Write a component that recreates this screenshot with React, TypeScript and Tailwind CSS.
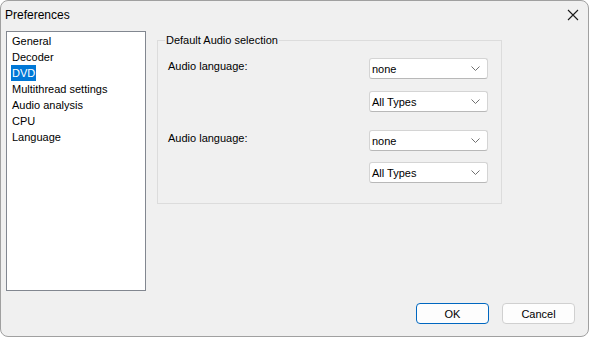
import React from 'react';

const ITEMS = ['General', 'Decoder', 'DVD', 'Multithread settings', 'Audio analysis', 'CPU', 'Language'];

function Chevron() {
  return (
    <svg width="9" height="5" viewBox="0 0 9 5" className="shrink-0">
      <path d="M0.5 0.5 L4.5 4.5 L8.5 0.5" fill="none" stroke="#707070" strokeWidth="1" />
    </svg>
  );
}

function Combo({ value }: { value: string }) {
  return (
    <div className="ml-auto flex h-[21px] w-[119px] items-center justify-between rounded-[3px] border border-[#d4d4d4] border-b-[#b8b8b8] bg-white pl-[2px] pr-[7px]">
      <span>{value}</span>
      <Chevron />
    </div>
  );
}

export default function App() {
  return (
    <div
      className="flex h-[337px] w-[589px] flex-col overflow-hidden rounded-[8px] border border-[#a0a0a0] bg-[#f0f0f0] text-[11px] leading-[16px] text-black"
      style={{ fontFamily: '"Liberation Sans", Arial, sans-serif' }}
    >
      {/* Title bar */}
      <div className="flex h-[27px] shrink-0 items-center justify-between pl-[4px] pr-[9px]">
        <span className="text-[12px]">Preferences</span>
        <svg width="12" height="12" viewBox="0 0 12 12">
          <path d="M1 1 L11 11 M11 1 L1 11" stroke="#1a1a1a" strokeWidth="1.1" />
        </svg>
      </div>

      {/* Body */}
      <div className="flex flex-1 pl-[5px] pt-[3px]">
        <div className="h-[260px] w-[140px] shrink-0 border border-[#828790] bg-white pl-[4px] pt-[1px]">
          {ITEMS.map((item) => (
            <div key={item} className="flex h-[16px] items-center">
              <span className={item === 'DVD' ? 'bg-[#0078d7] px-[1px] text-white' : 'px-[1px]'}>{item}</span>
            </div>
          ))}
        </div>

        <fieldset className="ml-[11px] mt-[1px] h-[172px] w-[345px] border border-[#dcdcdc] pl-[10px] pr-[13px]">
          <legend className="ml-[-3px] px-[1px] leading-[16px]">Default Audio selection</legend>
          <div className="mt-[10px] flex">
            <span>Audio language:</span>
            <Combo value="none" />
          </div>
          <div className="mt-[12px] flex">
            <Combo value="All Types" />
          </div>
          <div className="mt-[18px] flex">
            <span>Audio language:</span>
            <Combo value="none" />
          </div>
          <div className="mt-[11px] flex">
            <Combo value="All Types" />
          </div>
        </fieldset>
      </div>

      {/* Buttons */}
      <div className="flex shrink-0 justify-end gap-[13px] pb-[12px] pr-[13px]">
        <div className="flex h-[21px] w-[73px] items-center justify-center rounded-[4px] border border-[#0067c0] bg-[#fdfdfd]">
          OK
        </div>
        <div className="flex h-[21px] w-[73px] items-center justify-center rounded-[4px] border border-[#d0d0d0] bg-[#fdfdfd]">
          Cancel
        </div>
      </div>
    </div>
  );
}
